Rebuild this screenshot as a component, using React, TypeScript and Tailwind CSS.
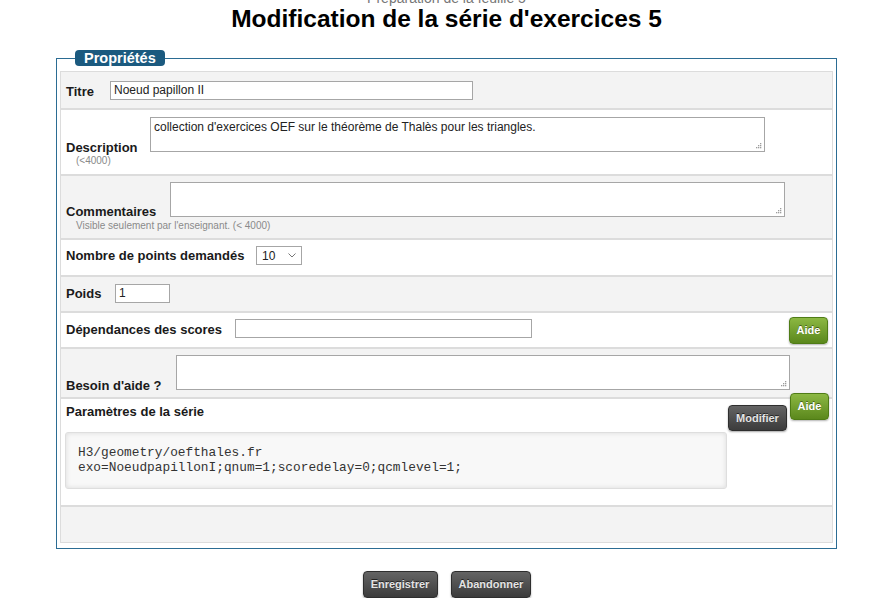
import React from 'react';

const label = 'font-bold text-[13px] text-[#1a1a1a] shrink-0';
const hint = 'text-[10px] leading-[12px] text-[#8a8a8a]';
const field = 'h-[19px] border border-[#a6a6a6] bg-white px-[3px] text-[12px] leading-[17px] text-[#222]';
const darkBtn =
  'rounded-[4px] border border-[#2e2e2e] bg-linear-to-b from-[#646464] to-[#3c3c3c] px-[7px] text-[11px] font-bold text-[#e4e4e4] shadow-[0_1px_2px_rgba(0,0,0,0.35)] [text-shadow:0_-1px_0_rgba(0,0,0,0.6)]';
const greenBtn =
  'h-[27px] w-[39px] rounded-[4px] border border-[#4f7c16] bg-linear-to-b from-[#8cb842] to-[#5b881c] text-[11px] font-bold text-white shadow-[0_1px_2px_rgba(0,0,0,0.3)] [text-shadow:0_-1px_0_rgba(0,0,0,0.45)]';

// dotted resize handle in the textarea corner
function Grip() {
  const dots = [
    [4, 0],
    [2, 2],
    [4, 2],
    [0, 4],
    [2, 4],
    [4, 4],
  ];
  return (
    <svg className="absolute bottom-[2px] right-[2px]" width="6" height="6" viewBox="0 0 6 6">
      {dots.map(([x, y], i) => (
        <rect key={i} x={x} y={y} width="1.3" height="1.3" fill="#9c9c9c" />
      ))}
    </svg>
  );
}

function Area({ className, text }: { className: string; text?: string }) {
  return (
    <div className={`relative h-[35px] border border-[#a6a6a6] bg-white px-[3px] pt-[2px] text-[12px] leading-[14px] text-[#222] ${className}`}>
      {text}
      <Grip />
    </div>
  );
}

function Row({ gray, className, children }: { gray?: boolean; className: string; children?: React.ReactNode }) {
  return (
    <div className={`border border-[#dcdcdc] pl-[5px] ${gray ? 'bg-[#f3f3f3]' : 'bg-white'} ${className}`}>
      {children}
    </div>
  );
}

export default function App() {
  return (
    <div className="min-h-screen bg-white font-['Liberation_Sans',Arial,sans-serif]">
      <div className="ml-[56px] w-[781px]">
        <p className="-mt-[9px] text-center text-[14px] leading-[14px] text-[#777]">Préparation de la feuille 5</p>
        <h1 className="text-center text-[24.5px] font-bold leading-[28px] text-black">
          Modification de la série d'exercices 5
        </h1>

        <fieldset className="mt-[17px] w-[781px] border border-[#2b6c93] px-[3px] pb-[5px] pt-[5px]">
          <legend className="ml-[15px] rounded-[4px] bg-[#1b5a7f] px-[9px] text-[14.5px] font-bold leading-[16px] text-white">
            Propriétés
          </legend>

          <Row gray className="flex h-[38px] items-center">
            <span className={`${label} w-[44px] pt-[3px] leading-[19px]`}>Titre</span>
            <div className={`${field} w-[363px]`}>Noeud papillon II</div>
          </Row>

          <Row className="h-[66px] pt-[7px]">
            <div className="flex items-end">
              <span className={`${label} w-[84px] -mb-[2px] leading-[12px]`}>Description</span>
              <Area
                className="w-[615px]"
                text="collection d'exercices OEF sur le théorème de Thalès pour les triangles."
              />
            </div>
            <div className={`${hint} mt-[3px] pl-[10px]`}>(&lt;4000)</div>
          </Row>

          <Row gray className="h-[64px] pt-[6px]">
            <div className="flex items-end">
              <span className={`${label} w-[104px] -mb-[1px] leading-[12px]`}>Commentaires</span>
              <Area className="w-[615px]" />
            </div>
            <div className={`${hint} mt-[3px] pl-[10px]`}>Visible seulement par l'enseignant. (&lt; 4000)</div>
          </Row>

          <Row className="flex h-[37px] items-start pt-[6px]">
            <span className={`${label} w-[190px] leading-[19px]`}>Nombre de points demandés</span>
            <div className="flex h-[19px] w-[46px] items-center border border-[#a6a6a6] bg-white pl-[5px] text-[12px] text-[#222]">
              10
              <svg className="ml-auto mr-[5px]" width="8" height="5" viewBox="0 0 8 5">
                <polyline points="0.5,0.5 4,4 7.5,0.5" fill="none" stroke="#777" strokeWidth="1" />
              </svg>
            </div>
          </Row>

          <Row gray className="flex h-[36px] items-center pb-[2px]">
            <span className={`${label} w-[49px] pt-[1px] leading-[19px]`}>Poids</span>
            <div className={`${field} w-[55px]`}>1</div>
          </Row>

          <Row className="flex h-[36px] items-center pr-[4px]">
            <span className={`${label} w-[169px] -mt-[1px] leading-[19px]`}>Dépendances des scores</span>
            <div className={`${field} w-[297px] -mt-[3px]`} />
            <button className={`${greenBtn} ml-auto`}>Aide</button>
          </Row>

          <Row gray className="h-[50px] pt-[6px]">
            <div className="flex items-end">
              <span className={`${label} w-[110px] -mb-[2px] leading-[12px]`}>Besoin d'aide ?</span>
              <Area className="w-[614px]" />
            </div>
          </Row>

          <Row className="relative flex h-[108px]">
            <div className="flex-1 pt-[5px]">
              <div className={`${label} leading-[16px]`}>Paramètres de la série</div>
              <div className="-ml-[1px] mt-[12px] h-[57px] w-[662px] rounded-[3px] border border-[#dedede] bg-[#f8f8f8] pl-[12px] pt-[12px] font-['Liberation_Mono','Courier_New',monospace] text-[12.8px] leading-[15px] text-[#333] shadow-[inset_0_0_5px_rgba(0,0,0,0.12)]">
                <div>H3/geometry/oefthales.fr</div>
                <div>exo=NoeudpapillonI;qnum=1;scoredelay=0;qcmlevel=1;</div>
              </div>
            </div>
            <button className={`${darkBtn} mr-[45px] mt-[6px] h-[26px] w-[59px] text-[#d8d8d8]`}>Modifier</button>
            <button className={`${greenBtn} absolute right-[3px] top-[-6px]`}>Aide</button>
          </Row>

          <Row gray className="h-[37px]" />
        </fieldset>

        <div className="mt-[22px] flex justify-center gap-[13px]">
          <button className={`${darkBtn} h-[27px] w-[75px]`}>Enregistrer</button>
          <button className={`${darkBtn} h-[27px] w-[80px]`}>Abandonner</button>
        </div>
      </div>
    </div>
  );
}
